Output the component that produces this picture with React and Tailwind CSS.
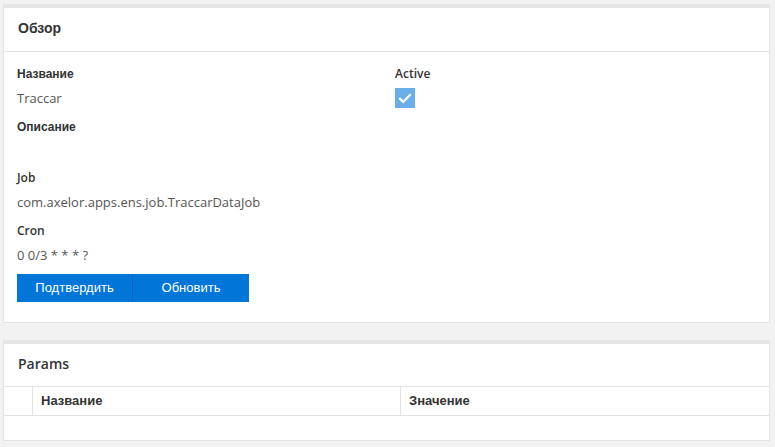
import React from "react";

const cyr = { fontFamily: '"Liberation Sans", Arial, sans-serif' };
const lat = { fontFamily: '"Open Sans", sans-serif' };

function Label({ children, cyrillic }) {
  return (
    <div
      className={`h-[18px] leading-[18px] text-[12px] text-[#333] ${cyrillic ? "font-bold" : "font-semibold"}`}
      style={cyrillic ? cyr : lat}
    >
      {children}
    </div>
  );
}

function Value({ children, last }) {
  return (
    <div
      className={`mt-[5px] ${last ? "mb-[9px]" : "mb-[10px]"} min-h-[18px] leading-[20px] text-[13px] text-[#555]`}
      style={lat}
    >
      {children}
    </div>
  );
}

export default function App() {
  return (
    <div className="w-[775px] h-[447px] bg-[#f2f2f2] pt-[4px] pl-[3px] pr-[5px] overflow-hidden">
      {/* Overview panel */}
      <div className="bg-white border border-[#e3e3e3] border-t-[4px] border-t-[#e6e6e6]">
        <div className="h-[44px] flex items-center px-[14px] border-b border-[#e3e3e3]">
          <span className="text-[14px] font-bold text-[#333] mt-[-2px]" style={cyr}>Обзор</span>
        </div>
        <div className="pt-[13px] px-[13px] pb-[20px]">
          <div className="grid grid-cols-[378px_1fr]">
            <div>
              <Label cyrillic>Название</Label>
              <Value>Traccar</Value>
              <Label cyrillic>Описание</Label>
              <Value></Value>
              <Label>Job</Label>
              <Value>com.axelor.apps.ens.job.TraccarDataJob</Value>
              <Label>Cron</Label>
              <Value last>0 0/3 * * * ?</Value>
            </div>
            <div>
              <Label>Active</Label>
              <div className="mt-[5px] w-[20px] h-[20px] bg-[#6aaee8] flex items-center justify-center">
                <svg width="20" height="20" viewBox="0 0 20 20">
                  <path d="M4.2 10 L8.2 13.8 L15.8 6.2" fill="none" stroke="white" strokeWidth="2.3" />
                </svg>
              </div>
            </div>
          </div>
          <div className="flex" style={cyr}>
            <button className="w-[116px] h-[28px] bg-[#0275d8] text-white text-[13px] border-r border-[#0266bd]">
              Подтвердить
            </button>
            <button className="w-[116px] h-[28px] bg-[#0275d8] text-white text-[13px]">Обновить</button>
          </div>
        </div>
      </div>

      {/* Params panel */}
      <div className="mt-[17px] bg-white border border-[#e3e3e3] border-t-[4px] border-t-[#e6e6e6]">
        <div className="h-[43px] flex items-center px-[14px] border-b border-[#e3e3e3]">
          <span className="text-[14px] font-semibold text-[#333] mt-[-3px]" style={lat}>Params</span>
        </div>
        <div className="flex h-[29px] border-b border-[#e3e3e3] text-[13px] font-bold text-[#333]" style={cyr}>
          <div className="w-[29px] border-r border-[#e3e3e3]"></div>
          <div className="w-[368px] border-r border-[#e3e3e3] flex items-center pl-[8px]">Название</div>
          <div className="flex-1 flex items-center pl-[8px]">Значение</div>
        </div>
        <div className="h-[24px]"></div>
      </div>
    </div>
  );
}
